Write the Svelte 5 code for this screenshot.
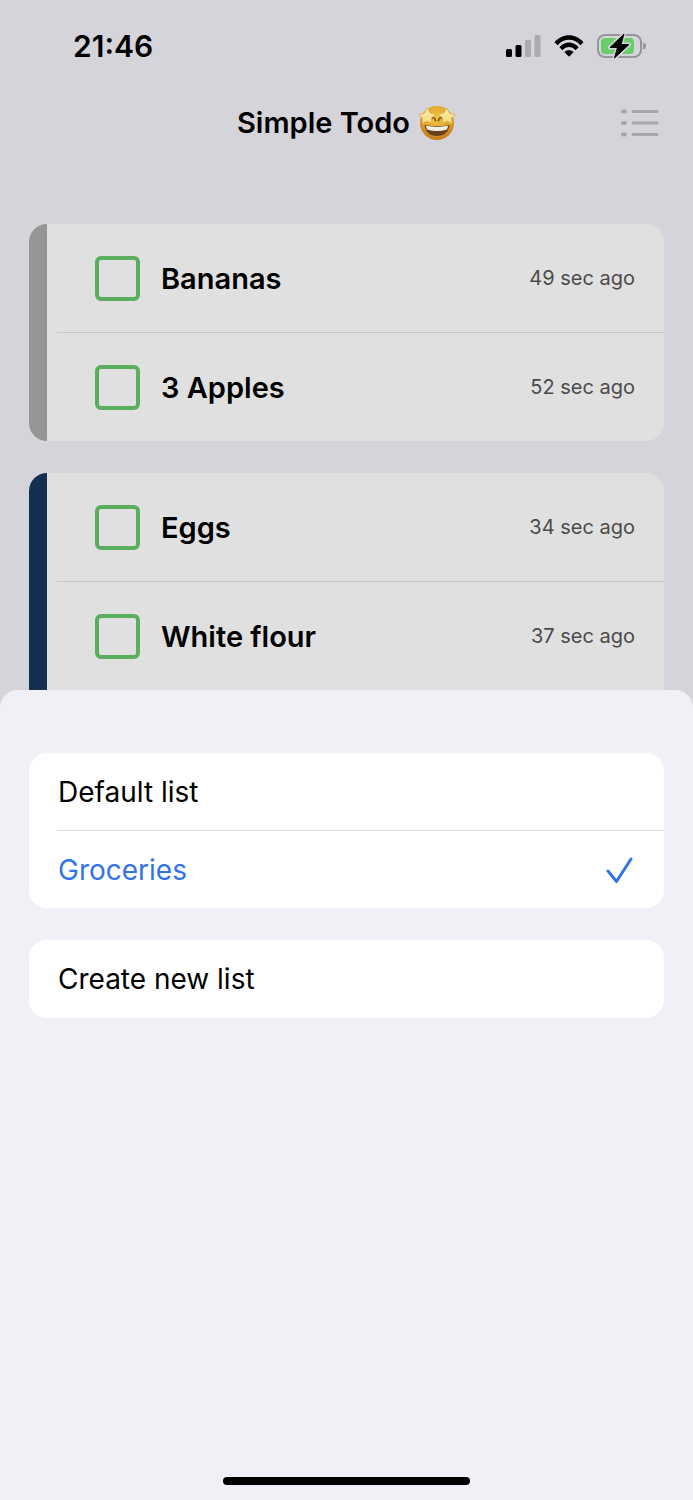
<script>
  let groups = $state([
    {
      id: 'plain',
      color: '#959595',
      items: [
        { name: 'Bananas', age: '49 sec ago', done: false },
        { name: '3 Apples', age: '52 sec ago', done: false },
      ],
    },
    {
      id: 'navy',
      color: '#14304f',
      items: [
        { name: 'Eggs', age: '34 sec ago', done: false },
        { name: 'White flour', age: '37 sec ago', done: false },
      ],
    },
  ]);
  const lists = ['Default list', 'Groceries'];
  let selected = $state('Groceries');
</script>

<div class="app">
  <div class="status">
    <span class="time">21:46</span>
    <div class="indicators">
      <svg width="35" height="22" viewBox="0 0 35 22" aria-hidden="true">
        <rect x="0" y="14" width="6" height="8" rx="1.5" />
        <rect x="9.5" y="10" width="6" height="12" rx="1.5" />
        <rect x="19" y="5" width="6" height="17" rx="1.5" fill="#abaaaf" />
        <rect x="28.5" y="0" width="6" height="22" rx="1.5" fill="#abaaaf" />
      </svg>
      <svg width="30" height="22" viewBox="0 0 30 22" aria-hidden="true">
        <path d="M.5 7.3C8.5-2 21.5-2 29.5 7.3L26.4 10.3C20 3 10 3 3.6 10.3Z" />
        <path d="M5.4 12.2C11 6 19 6 24.6 12.2L21.5 15.2C17.500 11 12.5 11 8.5 15.2Z" />
        <path d="M10.300 17C13 14.5 17 14.5 19.7 17L15 21.8Z" />
      </svg>
      <svg width="49" height="28" viewBox="0 0 49 28" aria-hidden="true">
        <rect x="1" y="3" width="43" height="22" rx="7" fill="none" stroke="#96969a" stroke-width="2" />
        <path d="M46 10.5Q49 11.500 49 14T46 17.5Z" fill="#96969a" />
        <rect x="4" y="6" width="33" height="16" rx="4" fill="#67ce68" />
        <path d="M27 2L13 15.500H20.500L17.500 26L32 12.500H24Z" stroke="#d5d4da" stroke-width="4" stroke-linejoin="round" />
        <path d="M27 2L13 15.500H20.500L17.500 26L32 12.500H24Z" stroke="#000" stroke-linejoin="round" />
      </svg>
    </div>
  </div>

  <header>
    <h1>
      Simple Todo
      <svg width="38" height="36" viewBox="0 0 38 36" role="img" aria-label="Star-struck">
        <defs>
          <radialGradient id="face" cx=".5" cy=".35" r=".65">
            <stop offset="0" stop-color="#f2c645" />
            <stop offset=".65" stop-color="#e3a02c" />
            <stop offset="1" stop-color="#c27619" />
          </radialGradient>
          <linearGradient id="star" x2="0" y2="1">
            <stop offset="0" stop-color="#f8ecb4" />
            <stop offset="1" stop-color="#f6dc72" />
          </linearGradient>
        </defs>
        <circle cx="19" cy="18" r="17" fill="url(#face)" />
        <path d="M12.500 15Q16 10 17.500 15.500M20.500 15.500Q22 10 25.500 15" fill="none" stroke="#8a5b18" stroke-width="2" stroke-linecap="round" />
        <path d="M6.500 20Q19 22.500 31.500 20Q30 31 19 31T6.500 20Z" fill="#68401a" />
        <path d="M7.800 20.800Q19 23 30.200 20.800L29 24.500Q19 27.500 9 24.500Z" fill="#f1eee5" />
        <path d="M9.500 3L12 7.800L18.300 9.500L13.800 12.800L13.500 18.500L9 16.300L3.800 19L4.500 13.300L.7 9.500L6.300 8.300Z" fill="url(#star)" stroke="#d99a35" stroke-width=".6" stroke-linejoin="round" />
        <path d="M28.500 3L26 7.800L19.700 9.500L24.200 12.800L24.500 18.500L29 16.300L34.200 19L33.500 13.300L37.300 9.500L31.700 8.300Z" fill="url(#star)" stroke="#d99a35" stroke-width=".6" stroke-linejoin="round" />
      </svg>
    </h1>
    <button class="menu" aria-label="Lists">
      <svg width="40" height="28" viewBox="0 0 40 28" fill="none" stroke="#a5a5aa" stroke-linecap="round">
        <path d="M3 2.500H5M3 14H5M3 25.500H5" stroke-width="4" />
        <path d="M13 2.500H37M13 14H37M13 25.500H37" stroke-width="3" />
      </svg>
    </button>
  </header>

  <main>
    {#each groups as group, g (group.id)}
      <section class="group" class:cut={g === groups.length - 1}>
        <div class="stripe" style:background={group.color}></div>
        <ul>
          {#each group.items as item (item.name)}
            <li>
              <label>
                <input type="checkbox" bind:checked={item.done} />
                <span>{item.name}</span>
              </label>
              <span class="age">{item.age}</span>
            </li>
          {/each}
        </ul>
      </section>
    {/each}
  </main>

  <div class="sheet" role="dialog" aria-label="Choose a list">
    <div class="panel">
      {#each lists as list}
        <button class="option" class:selected={selected === list} onclick={() => (selected = list)}>
          <span>{list}</span>
          {#if selected === list}
            <svg width="28" height="28" viewBox="0 0 28 28" fill="none" stroke="#3273e8" stroke-width="3" stroke-linecap="round" stroke-linejoin="round" aria-hidden="true">
              <path d="M3 15L11.500 25.500L26 3" />
            </svg>
          {/if}
        </button>
      {/each}
    </div>
    <div class="panel">
      <button class="option"><span>Create new list</span></button>
    </div>
    <div class="home"></div>
  </div>
</div>

<style>
  :global(body) {
    margin: 0;
    background: #d5d4da;
  }
  .app {
    display: flex;
    flex-direction: column;
    min-height: 100vh;
    font-family: Inter, 'Liberation Sans', sans-serif;
    color: #000;
  }
  .status {
    display: flex;
    align-items: center;
    justify-content: space-between;
    height: 92px;
    padding: 0 47px 0 73px;
  }
  .time {
    font-size: 30px;
    font-weight: 600;
  }
  .indicators {
    display: flex;
    align-items: center;
    gap: 13px;
  }
  header {
    display: grid;
    grid-template-columns: 1fr auto 1fr;
    align-items: center;
    height: 62px;
    padding: 0 33px;
  }
  h1 {
    grid-column: 2;
    display: flex;
    align-items: center;
    gap: 8px;
    margin: 0;
    font-size: 29px;
    font-weight: 600;
    line-height: 36px;
  }
  button {
    padding: 0;
    border: 0;
    background: none;
    font: inherit;
    color: inherit;
    cursor: pointer;
  }
  .menu {
    display: flex;
    justify-self: end;
  }
  main {
    display: flex;
    flex-direction: column;
    gap: 32px;
    padding: 70px 29px 0;
  }
  .group {
    display: flex;
    border-radius: 18px;
    overflow: hidden;
    background: #e0e0e0;
  }
  .group.cut {
    border-radius: 18px 18px 0 0;
  }
  .stripe {
    width: 18px;
  }
  ul {
    flex: 1;
    margin: 0;
    padding: 0 0 0 10px;
    list-style: none;
  }
  li {
    display: flex;
    align-items: center;
    justify-content: space-between;
    height: 108px;
    padding: 0 29px 0 38px;
  }
  li + li {
    border-top: 1px solid #c6c6c8;
  }
  label {
    display: flex;
    align-items: center;
    gap: 21px;
    font-size: 29px;
    font-weight: 600;
  }
  input {
    appearance: none;
    box-sizing: border-box;
    width: 45px;
    height: 45px;
    margin: 0;
    border: 4px solid #5aaf5e;
    border-radius: 6px;
  }
  input:checked {
    background: #5aaf5e;
  }
  .age {
    font-size: 20px;
    color: #4b4b4b;
  }
  .sheet {
    display: flex;
    flex: 1;
    flex-direction: column;
    gap: 32px;
    padding: 63px 29px 15px;
    border-radius: 18px 18px 0 0;
    background: #f1f0f6;
  }
  .panel {
    border-radius: 18px;
    overflow: hidden;
    background: #fff;
  }
  .option {
    display: flex;
    align-items: center;
    justify-content: space-between;
    width: 100%;
    height: 78px;
    padding: 0 31px 0 29px;
    font-size: 28px;
    text-align: left;
  }
  .option:has(+ .option) {
    height: 77px;
  }
  .option + .option {
    width: calc(100% - 28px);
    margin-left: 28px;
    padding-left: 1px;
    border-top: 1px solid #dcdcde;
  }
  .option.selected {
    color: #3273e8;
  }
  .home {
    align-self: center;
    width: 247px;
    height: 8px;
    margin-top: auto;
    border-radius: 4px;
    background: #000;
  }
</style>
